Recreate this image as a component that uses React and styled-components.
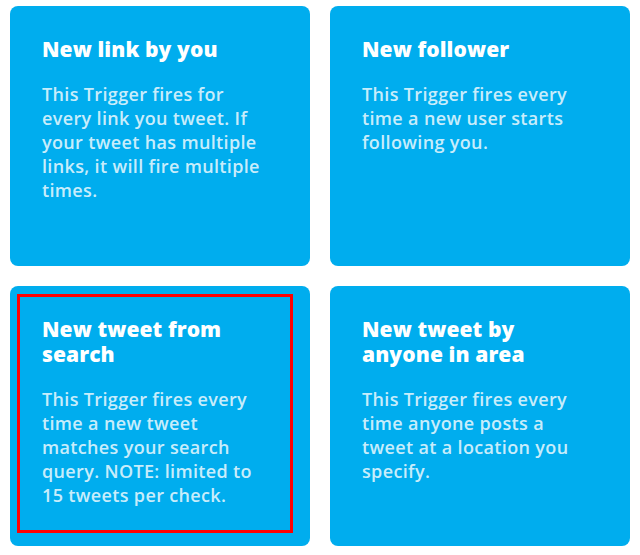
import React from "react";
import styled, { createGlobalStyle } from "styled-components";

const Global = createGlobalStyle`
  html, body { margin: 0; padding: 0; background: #ffffff; }
  body { font-family: "Open Sans", "Noto Sans", sans-serif; -webkit-font-smoothing: antialiased; }
`;

const Grid = styled.div`
  display: grid;
  grid-template-columns: repeat(2, 300px);
  grid-auto-rows: 260px;
  column-gap: 20px;
  row-gap: 20px;
  padding: 6px 10px;
`;

const Card = styled.div`
  position: relative;
  box-sizing: border-box;
  background: #00adee;
  border-radius: 8px;
  padding: 31px 32px 20px 32px;
  display: flex;
  flex-direction: column;
  gap: 20px;
`;

const Title = styled.h2`
  margin: 0;
  font-family: "Open Sans", "Noto Sans", sans-serif;
  font-weight: 800;
  font-size: 21px;
  line-height: 25px;
  color: #ffffff;
  letter-spacing: 0.1px;
`;

const Desc = styled.p`
  margin: 0;
  font-family: "Open Sans", "Noto Sans", sans-serif;
  font-weight: 600;
  font-size: 18px;
  line-height: 24px;
  color: rgba(255, 255, 255, 0.8);
  letter-spacing: 0.35px;
`;

const Highlight = styled.div`
  position: absolute;
  left: 7px;
  top: 8px;
  width: 276px;
  height: 239px;
  box-sizing: border-box;
  border: 3px solid #ff0000;
  pointer-events: none;
`;

const triggers = [
  {
    title: "New link by you",
    desc: "This Trigger fires for every link you tweet. If your tweet has multiple links, it will fire multiple times.",
  },
  {
    title: "New follower",
    desc: "This Trigger fires every time a new user starts following you.",
  },
  {
    title: "New tweet from search",
    desc: "This Trigger fires every time a new tweet matches your search query. NOTE: limited to 15 tweets per check.",
    selected: true,
  },
  {
    title: "New tweet by anyone in area",
    desc: "This Trigger fires every time anyone posts a tweet at a location you specify.",
  },
];

export default function App() {
  return (
    <>
      <Global />
      <Grid>
        {triggers.map((t) => (
          <Card key={t.title}>
            <Title>{t.title}</Title>
            <Desc>{t.desc}</Desc>
            {t.selected && <Highlight />}
          </Card>
        ))}
      </Grid>
    </>
  );
}
